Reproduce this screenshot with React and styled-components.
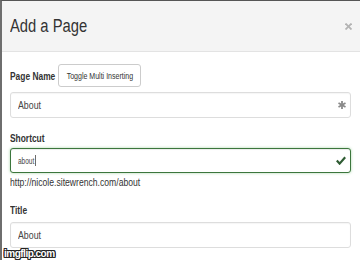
import React from 'react'
import styled, { createGlobalStyle } from 'styled-components'

const Global = createGlobalStyle`
  html, body {
    margin: 0;
    padding: 0;
    background: #ffffff;
  }
  body {
    font-family: "Liberation Sans", Arial, sans-serif;
    color: #333;
  }
`

// the capture is squeezed sideways, so text gets a horizontal scale
const Squeeze = styled.span`
  display: inline-block;
  white-space: nowrap;
  transform: scaleX(${p => p.$x || 0.8});
  transform-origin: ${p => p.$origin || 'left'} center;
`

const Modal = styled.div`
  position: relative;
  width: 360px;
  height: 260px;
  box-sizing: border-box;
  border-top: 1px solid #555;
  border-left: 2px solid #6e6e6e;
  background: #fff;
  overflow: hidden;
`

const Header = styled.div`
  height: 50px;
  display: flex;
  align-items: center;
  justify-content: space-between;
  padding: 0 9px 0 8px;
  background: #f4f4f4;
  border-bottom: 1px solid #e3e3e3;
`

const Heading = styled.h4`
  margin: 0;
  font-size: 18px;
  font-weight: 400;
  color: #333;
  padding-top: 1px;
`

const Close = styled.button`
  border: 0;
  background: none;
  padding: 0;
  margin-right: -1px;
  display: flex;
  cursor: pointer;
`

const Body = styled.div`
  display: flex;
  flex-direction: column;
  padding: 12px 9px 0 8px;
`

const LabelRow = styled.div`
  display: flex;
  align-items: center;
  gap: 3px;
  height: 23px;
`

const Label = styled.label`
  display: block;
  width: ${p => (p.$w ? `${p.$w}px` : 'auto')};
  font-size: 10.5px;
  font-weight: 700;
  color: #333;
  margin: ${p => p.$top || 0}px 0 0;
  line-height: 14px;
`

const ToggleButton = styled.button`
  width: 83px;
  height: 23px;
  padding: 0;
  display: flex;
  align-items: center;
  justify-content: center;
  border: 1px solid #ccc;
  border-radius: 3px;
  background: #fff;
  font-family: inherit;
  font-size: 9.5px;
  color: #333;
  box-sizing: border-box;
`

const Field = styled.div`
  display: flex;
  align-items: center;
  height: ${p => p.$h || 26}px;
  margin-top: ${p => p.$top || 0}px;
  padding: 0 4px 0 7px;
  box-sizing: border-box;
  border: 1px solid ${p => (p.$ok ? '#3c763d' : '#ddd')};
  border-radius: 3px;
  background: #fff;
  box-shadow: ${p =>
    p.$ok
      ? 'inset 0 1px 1px rgba(0,0,0,.075), 0 0 3px #a9d5a9'
      : 'inset 0 1px 1px rgba(0,0,0,.04)'};
`

const Value = styled.span`
  flex: 1;
  font-size: ${p => p.$size || 11}px;
  color: #444;
`

const Caret = styled.span`
  display: inline-block;
  width: 1px;
  height: 11px;
  background: #333;
  vertical-align: -2px;
  margin-left: 1px;
`

const Help = styled.div`
  font-size: 10.5px;
  color: #333;
  margin-top: 3px;
  line-height: 13px;
`

const Watermark = styled.div`
  position: absolute;
  left: 2px;
  bottom: 1px;
  font-weight: 700;
  font-size: 10px;
  letter-spacing: -0.5px;
  color: #fff;
  line-height: 10px;
  text-shadow: 1px 0 0 #222, -1px 0 0 #222, 0 1px 0 #222, 0 -1px 0 #222,
    1px 1px 0 #222, -1px -1px 0 #222, 1px -1px 0 #222, -1px 1px 0 #222;
`

const Asterisk = () => (
  <svg width="8" height="8" viewBox="0 0 8 8">
    <g stroke="#8a8a8a" strokeWidth="1.8" strokeLinecap="butt">
      <line x1="4" y1="0" x2="4" y2="8" />
      <line x1="0.5" y1="2" x2="7.5" y2="6" />
      <line x1="0.5" y1="6" x2="7.5" y2="2" />
    </g>
  </svg>
)

const Check = () => (
  <svg width="10" height="9" viewBox="0 0 10 9">
    <path d="M0.8 4.6 L3.6 7.6 L9.2 1.2" fill="none" stroke="#2f5c33" strokeWidth="2.2" />
  </svg>
)

const X = () => (
  <svg width="7" height="7" viewBox="0 0 7 7">
    <g stroke="#b3b3b3" strokeWidth="1.8">
      <line x1="0.5" y1="0.5" x2="6.5" y2="6.5" />
      <line x1="6.5" y1="0.5" x2="0.5" y2="6.5" />
    </g>
  </svg>
)

export default function App() {
  return (
    <>
      <Global />
      <Modal>
        <Header>
          <Heading>
            <Squeeze $x={0.82}>Add a Page</Squeeze>
          </Heading>
          <Close aria-label="Close">
            <X />
          </Close>
        </Header>
        <Body>
          <LabelRow>
            <Label $w={45}>
              <Squeeze>Page Name</Squeeze>
            </Label>
            <ToggleButton>
              <Squeeze $x={0.74} $origin="center">Toggle Multi Inserting</Squeeze>
            </ToggleButton>
          </LabelRow>
          <Field $top={5}>
            <Value>
              <Squeeze>About</Squeeze>
            </Value>
            <Asterisk />
          </Field>

          <Label $top={13}>
            <Squeeze>Shortcut</Squeeze>
          </Label>
          <Field $top={3} $h={25} $ok>
            <Value $size={9}>
              <Squeeze $x={0.72}>
                about
                <Caret />
              </Squeeze>
            </Value>
            <Check />
          </Field>
          <Help>
            <Squeeze $x={0.82}>http://nicole.sitewrench.com/about</Squeeze>
          </Help>

          <Label $top={14}>
            <Squeeze>Title</Squeeze>
          </Label>
          <Field $top={5} $h={26}>
            <Value>
              <Squeeze>About</Squeeze>
            </Value>
          </Field>
        </Body>
        <Watermark>imgflip.com</Watermark>
      </Modal>
    </>
  )
}
